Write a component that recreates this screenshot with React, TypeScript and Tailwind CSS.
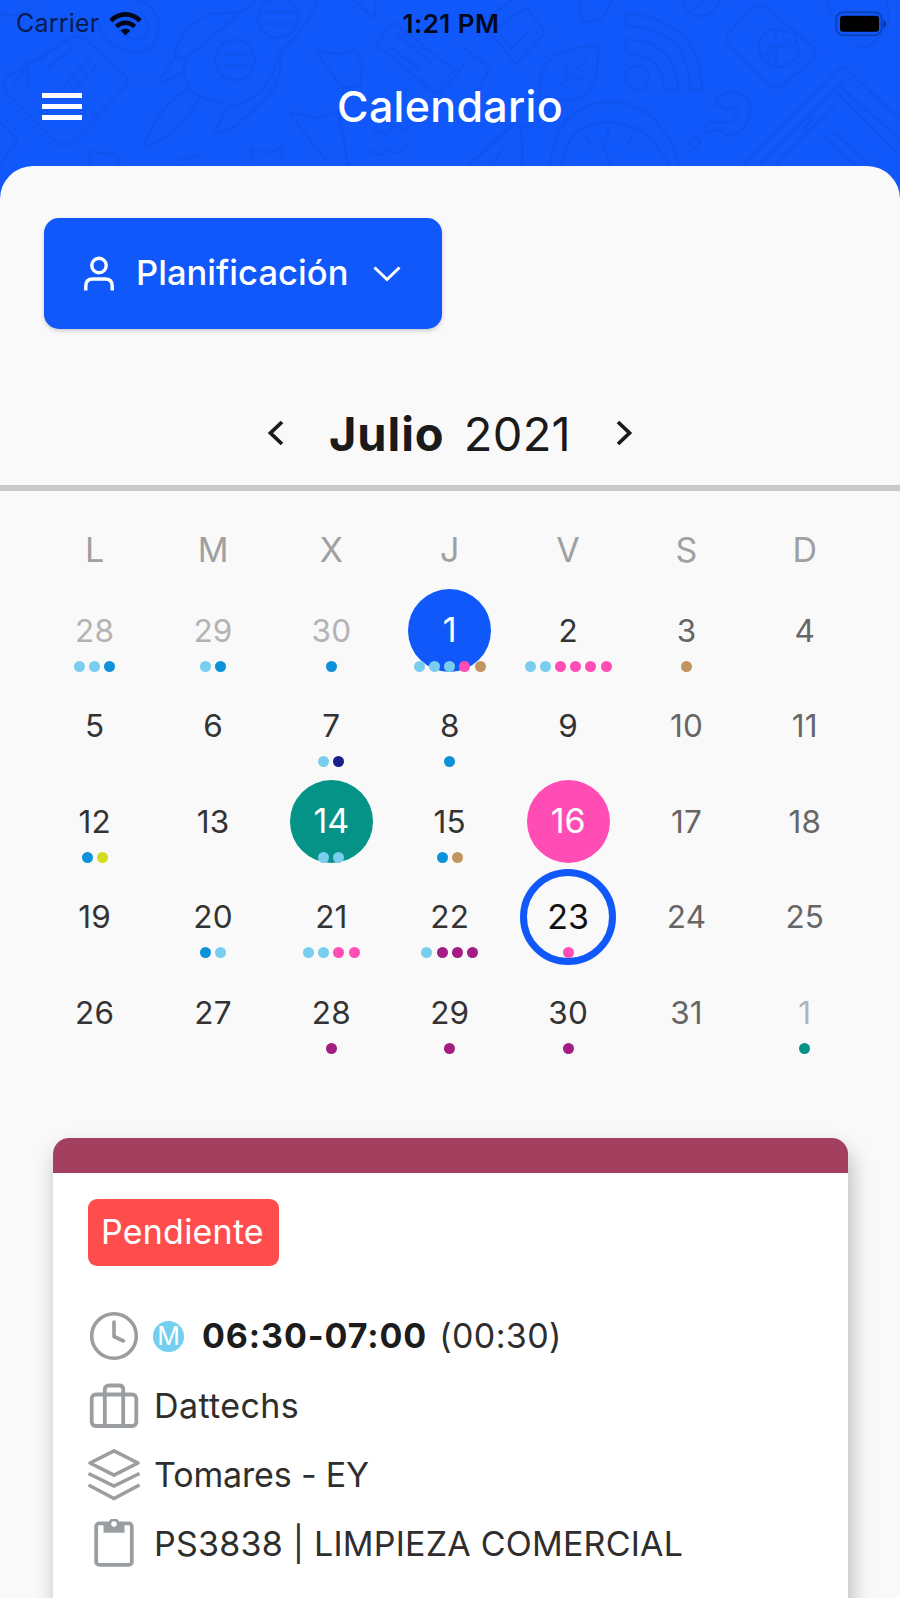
import React from 'react';
import clsx from 'clsx';

const dotColors = {
  sky: 'bg-[#79cdee]',
  blue: 'bg-[#0d92d9]',
  navy: 'bg-[#17208c]',
  pink: 'bg-[#ff4db5]',
  tan: 'bg-[#c09560]',
  lime: 'bg-[#d6dc1f]',
  plum: 'bg-[#a31d83]',
  teal: 'bg-[#069387]',
};

type Dot = keyof typeof dotColors;

interface Day {
  n: number;
  dots?: Dot[];
  out?: boolean;
  mark?: 'blue' | 'teal' | 'pink' | 'ring';
}

const weekdays = ['L', 'M', 'X', 'J', 'V', 'S', 'D'];

const days: Day[] = [
  { n: 28, out: true, dots: ['sky', 'sky', 'blue'] },
  { n: 29, out: true, dots: ['sky', 'blue'] },
  { n: 30, out: true, dots: ['blue'] },
  { n: 1, mark: 'blue', dots: ['sky', 'sky', 'sky', 'pink', 'tan'] },
  { n: 2, dots: ['sky', 'sky', 'pink', 'pink', 'pink', 'pink'] },
  { n: 3, dots: ['tan'] },
  { n: 4 },
  { n: 5 },
  { n: 6 },
  { n: 7, dots: ['sky', 'navy'] },
  { n: 8, dots: ['blue'] },
  { n: 9 },
  { n: 10 },
  { n: 11 },
  { n: 12, dots: ['blue', 'lime'] },
  { n: 13 },
  { n: 14, mark: 'teal', dots: ['sky', 'sky'] },
  { n: 15, dots: ['blue', 'tan'] },
  { n: 16, mark: 'pink' },
  { n: 17 },
  { n: 18 },
  { n: 19 },
  { n: 20, dots: ['blue', 'sky'] },
  { n: 21, dots: ['sky', 'sky', 'pink', 'pink'] },
  { n: 22, dots: ['sky', 'plum', 'plum', 'plum'] },
  { n: 23, mark: 'ring', dots: ['pink'] },
  { n: 24 },
  { n: 25 },
  { n: 26 },
  { n: 27 },
  { n: 28, dots: ['plum'] },
  { n: 29, dots: ['plum'] },
  { n: 30, dots: ['plum'] },
  { n: 31 },
  { n: 1, out: true, dots: ['teal'] },
];

const marks = {
  blue: 'size-[83px] bg-[#1158fb] text-white text-[34px]',
  teal: 'size-[83px] bg-[#069387] text-white text-[34px]',
  pink: 'size-[83px] bg-[#ff4db5] text-white text-[34px]',
  ring: 'size-[96px] border-[7px] border-[#1158fb] text-[#111] text-[34px]',
};

function HeaderPattern() {
  return (
    <svg
      className="absolute inset-x-0 top-0"
      width="900"
      height="200"
      viewBox="0 0 900 200"
      fill="none"
      stroke="#1053ef"
      strokeWidth="2.4"
      strokeLinecap="round"
      strokeLinejoin="round"
    >
      {/* wallet */}
      <path d="M8 76 72 38q8-4 14 2l38 34q6 6 2 12L72 142q-8 6-16 0L6 92q-4-8 2-16ZM14 84 28 62v26M40 60l26-20M48 68l26-22M92 56 62 88M100 62 68 96" />
      <path d="M0 14q20 6 36-10M96 20q10 34 46 32 20-8 16-32-6-16-20-20M120 30q10 14 26 6 6-10-2-20M0 122l18 18-18 24M90 164v-12l28 2v10" />
      {/* rocket */}
      <path d="M318 0q-10 26-38 52-8 40-44 54-30-4-44-14-12-14-6-34L256 0M186 60l-12-6q10-30 36-40l30-2M280 54q2 32-16 46l-28 26-22 8 14-28M186 90q-34 24-42 58 32-12 56-50M176 56l-18 26q8 0 24-10" />
      <circle cx="235" cy="60" r="20" />
      <circle cx="278" cy="18" r="20" />
      <path d="M216 54h38M216 66h38M260 12h38M260 24h38" />
      {/* stars and small shapes */}
      <path d="m316 52 26 2 14-4 6 14-2 22-18 2ZM288 112l30 6 20-8 6 30 4 26M288 112l38 48M252 162v-14l8 4h12l10-5v16M180 160l18-4M354 0l20 18 2-18" />
      <path d="m376 44 18-22 60 48-18 24ZM388 44l32 26M396 34l34 28M440 96l26-34M372 138q4-10 14-4 4-12 16-4l18-8M370 150q10 10 18 0 14 8 20-8" />
      <path d="M486 18l26-18M490 32l26 32 30-32-20-24ZM500 34l12 14 18-18M462 46l28 22-14 24" />
      {/* feed symbol */}
      <path d="M626 14q74 4 76 76h-12q0-62-64-64ZM626 40q50 0 52 50h-14q0-36-38-36Z" />
      <circle cx="637" cy="78" r="12" />
      {/* leaf */}
      <path d="M540 92q-4-46 58-46 2 52-28 54-18 2-24-4M560 86l26-26M566 64v14h16M580 0q-4 22 10 22t22-22M684 0q0 16 14 16T720 0M694 10l12-10" />
      {/* stopwatch */}
      <path d="M550 164q8-60 58-62t72 62M562 164q6-42 46-42t60 42M608 128v10M586 136l6 10M632 136l-6 10M602 140l8 24" />
      {/* question mark */}
      <path d="M716 104q2-14 20-12 16 4 14 22-4 16-18 22-10-2-12-6l-16 2q0-10 10-10 22 4 24-10-2-8-10-2Z" />
      <circle cx="695" cy="143" r="5" />
      {/* brain */}
      <path d="m728 34 24-26q8-6 14 0l46 38q6 6 0 14l-30 26q-6 4-12 0l-40-40q-6-6-2-12ZM762 36q10-12 22-4 12-2 12 10 8 14-6 20-8 10-18 2-14 0-12-14-4-8 2-14ZM764 46h28M776 32v34M760 58l30-18" />
      <path d="M828 0q0 14 8 18M886 0q8 20-6 36-12 16-26 8" />
      {/* notebook */}
      <path d="m744 164 92-92q6-8 12-2l52 50M760 164l82-82M776 164l58-58M834 90l62 62M840 86l60 54M826 138l28 26M834 132l34 32M804 128l8-8" />
      <path d="M470 164l48-44q6 20 4 44M492 164l12-16M520 130l12-8" />
    </svg>
  );
}

function StatusBar() {
  return (
    <div className="relative grid h-[47px] shrink-0 grid-cols-3 items-center pr-[14px] pl-4 text-black">
      <div className="flex items-center gap-[10px]">
        <span className="text-[25px] tracking-[0.2px] text-[#061b52]">Carrier</span>
        <svg width="33" height="24" viewBox="0 0 33 24" fill="none" stroke="#02081c" strokeWidth="4.6">
          <path d="M1.8 8.7Q8.5 2.4 16.5 2.4t14.7 6.3" />
          <path d="M7.4 14.7q4-3.9 9.1-3.9t9.1 3.9" />
          <path d="M16.5 23.6 11.6 18.4q4.9-3.8 9.8 0Z" fill="#02081c" stroke="none" />
        </svg>
      </div>
      <span className="text-center text-[26px] font-semibold tracking-[0.45px] text-[#02081c]">1:21 PM</span>
      <svg className="justify-self-end" width="51" height="26" viewBox="0 0 51 26">
        <rect x="1.2" y="1.2" width="45.6" height="23" rx="7" fill="none" stroke="#0b43bd" strokeWidth="2" />
        <rect x="5" y="4.8" width="39" height="16" rx="3" fill="#000" />
        <path d="M48.5 9v8q2.5-1.5 2.5-4t-2.5-4Z" fill="#0a2f8a" />
      </svg>
    </div>
  );
}

function ClockIcon() {
  return (
    <svg width="50" height="50" viewBox="0 0 50 50" fill="none" stroke="#9b9ea1" strokeWidth="3.6" strokeLinecap="round" strokeLinejoin="round">
      <circle cx="25" cy="25" r="22.3" />
      <path d="M25 11v14.5l9.5 4.5" />
    </svg>
  );
}

function SuitcaseIcon() {
  return (
    <svg width="50" height="46" viewBox="0 0 50 46" fill="none" stroke="#9b9ea1" strokeWidth="3.8" strokeLinejoin="round">
      <rect x="2.7" y="11.5" width="44.6" height="31.5" rx="4" />
      <path d="M15.8 43V6.5q0-4 4-4h10.4q4 0 4 4V43" />
    </svg>
  );
}

function LayersIcon() {
  return (
    <svg width="54" height="54" viewBox="0 0 54 54" fill="none" stroke="#9b9ea1" strokeWidth="3.6">
      <path d="M27 2.8 51 15 27 27.2 3 15Z" strokeLinejoin="round" />
      <path d="m1.5 25.5 25.500 12.5 25.500-12.500M1.500 37 27 50.500 52.500 37" />
    </svg>
  );
}

function ClipboardIcon() {
  return (
    <svg width="40" height="50" viewBox="0 0 40 50" fill="none" stroke="#9b9ea1" strokeWidth="3.8" strokeLinejoin="round">
      <rect x="2.2" y="4.4" width="35.6" height="41.5" rx="3" />
      <path d="M9.500 3.500h5q1-4 5.500-4t5.500 4h5V13.800h-21Z" fill="#9b9ea1" stroke="none" />
      <circle cx="20" cy="5" r="2.8" fill="#fff" stroke="none" />
    </svg>
  );
}

function DayCell({ day, weekend }: { day: Day; weekend: boolean }) {
  return (
    <div className="relative flex items-center justify-center">
      <span
        className={clsx(
          'flex shrink-0 items-center justify-center rounded-full leading-none',
          day.mark ? marks[day.mark] : 'text-[31.5px] tracking-[0.2px]',
          !day.mark && (day.out ? 'text-[#b3b3b3]' : weekend ? 'text-[#666]' : 'text-[#333]')
        )}
      >
        {day.n}
      </span>
      {day.dots && (
        <div className="absolute inset-x-0 top-[78px] flex justify-center gap-[4.2px]">
          {day.dots.map((dot, i) => (
            <span key={i} className={clsx('size-[11px] rounded-full', dotColors[dot])} />
          ))}
        </div>
      )}
    </div>
  );
}

function InfoRow({ icon, children }: { icon: React.ReactNode; children: React.ReactNode }) {
  return (
    <div className="flex h-[69.4px] items-center text-[34px] text-[#2e2e2e]">
      <div className="-ml-px mr-[13px] flex w-[54px] justify-center">{icon}</div>
      {children}
    </div>
  );
}

export default function App() {
  return (
    <div className="relative flex h-[1598px] w-[900px] flex-col overflow-hidden bg-[#1158fb] font-['Inter',sans-serif] leading-none">
      <HeaderPattern />
      <StatusBar />

      <header className="relative grid h-[119px] shrink-0 grid-cols-[1fr_auto_1fr] items-center px-[42px] pb-px">
        <button className="flex w-10 flex-col gap-[6px]">
          <span className="h-[5px] bg-white" />
          <span className="h-[5px] bg-white" />
          <span className="h-[5px] bg-white" />
        </button>
        <h1 className="text-[43px] font-medium tracking-[0.3px] text-white">Calendario</h1>
      </header>

      <main className="relative flex-1 rounded-t-[33px] bg-[#f9f9f9] pt-[52px]">
        <button className="ml-[44px] flex h-[111px] w-[398px] items-center rounded-[15px] bg-[#1158fb] pl-[39px] text-white shadow-[0_2px_4px_rgba(0,0,0,0.18)]">
          <svg width="32" height="36" viewBox="0 0 32 36" fill="none" stroke="currentColor" strokeWidth="3.4">
            <circle cx="16" cy="9.5" r="7.2" />
            <path d="M2.8 34.5V30q0-7 7-7h12.400q7 0 7 7v4.500" />
          </svg>
          <span className="ml-[21px] text-[34.5px] font-medium tracking-[0.05px]">Planificación</span>
          <svg className="ml-[25px]" width="28" height="18" viewBox="0 0 28 18" fill="none" stroke="currentColor" strokeWidth="3">
            <path d="m1.5 2.500 12.500 12 12.500-12" />
          </svg>
        </button>

        <div className="mt-[52px] flex h-[104px] items-center justify-center text-[#1a1a1a]">
          <svg width="17" height="26" viewBox="0 0 17 26" fill="none" stroke="currentColor" strokeWidth="3.8">
            <path d="M15 2 3.500 13 15 24" />
          </svg>
          <h2 className="mx-[45px] text-[47px]">
            <span className="font-bold tracking-[0.9px]">Julio</span>{' '}
            <span className="ml-[6px] tracking-[0.3px]">2021</span>
          </h2>
          <svg width="17" height="26" viewBox="0 0 17 26" fill="none" stroke="currentColor" strokeWidth="3.8">
            <path d="M2 2l11.500 11L2 24" />
          </svg>
        </div>
        <div className="h-[6px] bg-[#c8c9cb]" />

        <div className="pr-[36px] pl-[35.5px]">
          <div className="mt-[41px] grid h-9 grid-cols-7 items-center text-center text-[34px] text-[#a0a0a0]">
            {weekdays.map((d) => (
              <span key={d}>{d}</span>
            ))}
          </div>
          <div className="mt-[14.5px] grid auto-rows-[95.5px] grid-cols-7">
            {days.map((day, i) => (
              <DayCell key={i} day={day} weekend={i % 7 > 4} />
            ))}
          </div>
        </div>

        <section className="mt-[77.5px] mr-[52px] ml-[53px] h-[560px] overflow-hidden rounded-[16px] bg-white shadow-[3px_12px_22px_rgba(0,0,0,0.26)]">
          <div className="h-[35px] bg-[#a3405f]" />
          <div className="pt-[26px] pl-[35px]">
            <span className="flex h-[67px] w-[191px] items-center justify-center rounded-[9px] bg-[#ff4d4d] pr-[2px] text-[34px] tracking-[0.2px] text-white">
              Pendiente
            </span>
            <div className="mt-[36px]">
              <InfoRow icon={<ClockIcon />}>
                <span className="-ml-px flex size-[31px] items-center justify-center rounded-full bg-[#72cff0] text-[25px] text-white">
                  M
                </span>
                <span className="ml-[18px] font-bold tracking-[0.9px] text-[#1c1c1c]">06:30-07:00</span>
                <span className="ml-[12px] tracking-[0.4px]">(00:30)</span>
              </InfoRow>
              <InfoRow icon={<SuitcaseIcon />}>
                <span className="tracking-[0.4px]">Dattechs</span>
              </InfoRow>
              <InfoRow icon={<LayersIcon />}>
                <span className="tracking-[-0.15px]">Tomares - EY</span>
              </InfoRow>
              <InfoRow icon={<ClipboardIcon />}>
                <span className="tracking-[0.22px]">PS3838 | LIMPIEZA COMERCIAL</span>
              </InfoRow>
            </div>
          </div>
        </section>
      </main>
    </div>
  );
}
